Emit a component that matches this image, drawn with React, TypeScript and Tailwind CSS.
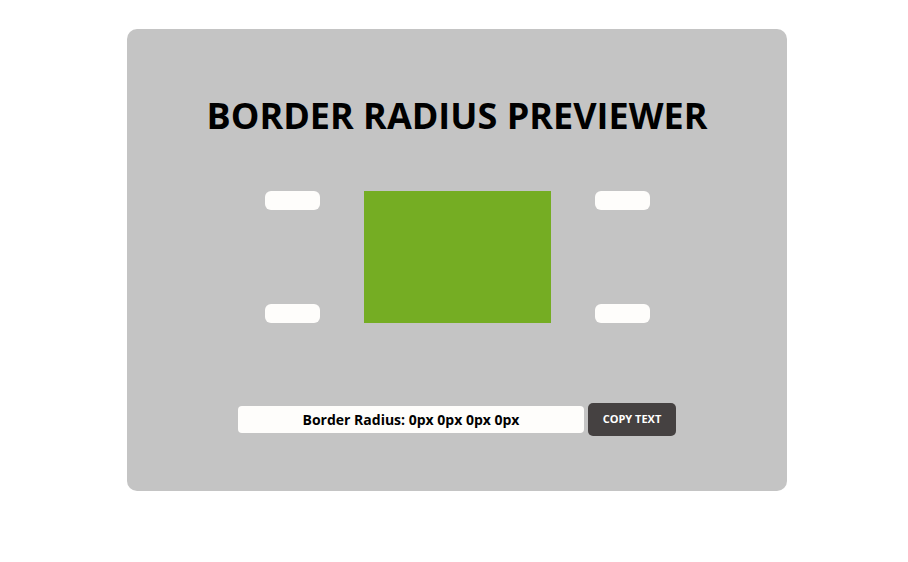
export default function App() {
  return (
    <div className="min-h-[562px] bg-white pl-[6px] pt-[29px]" style={{ fontFamily: "'Open Sans', 'Noto Sans', sans-serif" }}>
      <div className="mx-auto flex h-[462px] w-[660px] flex-col items-center rounded-[10px] bg-[#c4c4c4]">
        {/* Title */}
        <h1 className="mt-[65px] text-[36px] font-bold leading-[44px] text-black">
          BORDER RADIUS PREVIEWER
        </h1>

        {/* Preview */}
        <div className="mt-[53px] flex gap-[44px]">
          <div className="flex h-[132px] flex-col justify-between">
            <input className="h-[19px] w-[55px] rounded-[6px] bg-[#fefdfb] outline-none" />
            <input className="h-[19px] w-[55px] rounded-[6px] bg-[#fefdfb] outline-none" />
          </div>
          <div className="h-[132px] w-[187px] bg-[#75ad23]" />
          <div className="flex h-[132px] flex-col justify-between">
            <input className="h-[19px] w-[55px] rounded-[6px] bg-[#fefdfb] outline-none" />
            <input className="h-[19px] w-[55px] rounded-[6px] bg-[#fefdfb] outline-none" />
          </div>
        </div>

        {/* Output */}
        <div className="mt-[80px] flex items-center gap-[4px]">
          <div className="mb-[1px] flex h-[27px] w-[346px] items-center justify-center rounded-[4px] bg-[#fefdfb] text-[14px] font-bold text-black">
            Border Radius: 0px 0px 0px 0px
          </div>
          <button className="h-[33px] w-[88px] rounded-[5px] bg-[#454141] text-[11px] font-bold text-white">
            COPY TEXT
          </button>
        </div>
      </div>
    </div>
  );
}
